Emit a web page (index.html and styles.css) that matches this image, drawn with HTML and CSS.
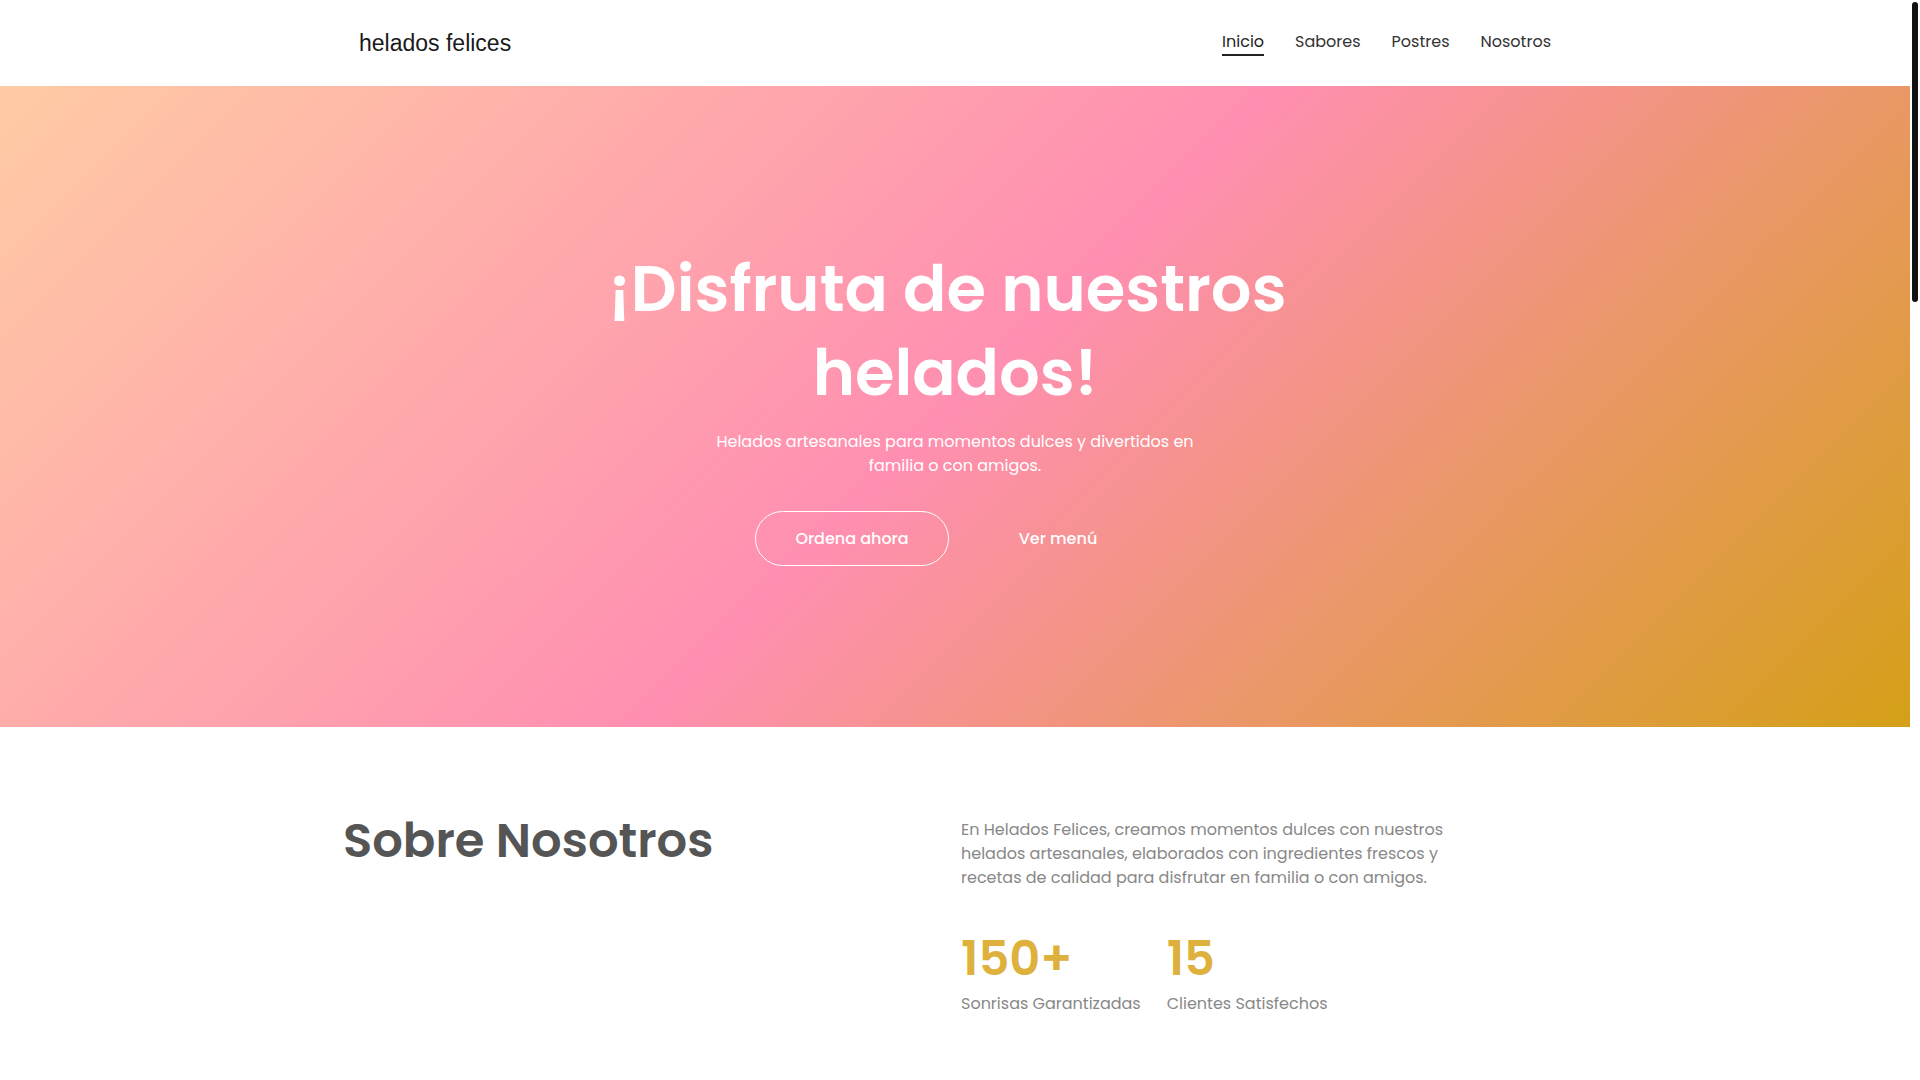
FILE: index.html
```html
<!DOCTYPE html>
<html lang="es">
<head>
<meta charset="utf-8">
<title>Helados Felices</title>
<link rel="stylesheet" href="styles.css">
</head>
<body>
<header class="site-header">
  <div class="nav-inner">
    <a class="logo" href="#">helados felices</a>
    <nav class="nav-links">
      <a class="nav-link active" href="#">Inicio</a>
      <a class="nav-link" href="#">Sabores</a>
      <a class="nav-link" href="#">Postres</a>
      <a class="nav-link" href="#">Nosotros</a>
    </nav>
  </div>
</header>

<section class="hero">
  <div class="hero-content">
    <h1 class="hero-title">¡Disfruta de nuestros helados!</h1>
    <p class="hero-text">Helados artesanales para momentos dulces y divertidos en familia o con amigos.</p>
    <div class="hero-actions">
      <a class="btn btn-outline" href="#">Ordena ahora</a>
      <a class="btn btn-ghost" href="#">Ver menú</a>
    </div>
  </div>
</section>

<section class="about">
  <div class="about-inner">
    <h2 class="about-title">Sobre Nosotros</h2>
    <div class="about-body">
      <p class="about-text">En Helados Felices, creamos momentos dulces con nuestros helados artesanales, elaborados con ingredientes frescos y recetas de calidad para disfrutar en familia o con amigos.</p>
      <div class="stats">
        <div class="stat">
          <span class="stat-number">150+</span>
          <span class="stat-label">Sonrisas Garantizadas</span>
        </div>
        <div class="stat">
          <span class="stat-number">15</span>
          <span class="stat-label">Clientes Satisfechos</span>
        </div>
      </div>
    </div>
  </div>
</section>

<div class="scrollbar" aria-hidden="true"><div class="scrollbar-thumb"></div></div>
</body>
</html>
```

FILE: styles.css
```css
html {
  background: #fff;
}

body {
  margin: 0;
  padding-right: 10px;
  font-family: "Poppins", "Open Sans", sans-serif;
  color: #333;
  background: #fff;
}

/* Scrollbar (as shown at the right edge) */
.scrollbar {
  position: fixed;
  top: 0;
  right: 0;
  width: 10px;
  height: 1080px;
  background: #fff;
}

.scrollbar-thumb {
  margin: 2px;
  width: 6px;
  height: 300px;
  border-radius: 3px;
  background: #111;
}

/* Header */
.site-header {
  height: 86px;
  display: flex;
  align-items: center;
  background: #fff;
}

.nav-inner {
  width: 1192px;
  margin: 0 auto;
  display: flex;
  justify-content: space-between;
  align-items: center;
}

.logo {
  font-family: "Liberation Sans", Arial, sans-serif;
  font-size: 23px;
  color: #1a1a1a;
  text-decoration: none;
}

.nav-links {
  display: flex;
  gap: 31px;
  align-items: center;
}

.nav-link {
  font-size: 16px;
  line-height: 24px;
  color: #333;
  text-decoration: none;
  border-bottom: 2px solid transparent;
}

.nav-link.active {
  color: #222;
  border-bottom-color: #222;
}

/* Hero */
.hero {
  height: 641px;
  display: flex;
  align-items: center;
  justify-content: center;
  text-align: center;
  color: #fff;
  background: linear-gradient(135deg, #ffcba4 0%, #ff8fb1 50%, #d4a017 100%);
}

.hero-title {
  font-size: 64px;
  font-weight: 600;
  line-height: 1.3;
  max-width: 820px;
  margin: 0 auto;
  white-space: break-spaces;
}

.hero-text {
  font-size: 16px;
  line-height: 24px;
  max-width: 500px;
  margin: 16px auto 0;
}

.hero-actions {
  display: flex;
  justify-content: center;
  gap: 12px;
  margin-top: 33px;
}

.btn {
  box-sizing: border-box;
  width: 194px;
  padding: 16px 0;
  border-radius: 999px;
  border: 1px solid transparent;
  font-size: 16px;
  font-weight: 500;
  line-height: 21px;
  text-align: center;
  color: #fff;
  text-decoration: none;
}

.btn-outline {
  border-color: #fff;
}

/* About */
.about {
  padding: 80px 0 80px;
}

.about-inner {
  width: 1224px;
  margin: 0 auto;
  display: grid;
  grid-template-columns: 1fr 1fr;
  column-gap: 12px;
  align-items: start;
}

.about-title {
  font-size: 48px;
  font-weight: 600;
  line-height: 1.2;
  color: #555;
  margin: 5px 0 0;
}

.about-text {
  font-size: 16px;
  line-height: 24px;
  color: #888;
  max-width: 500px;
  margin: 11px 0 0;
}

.stats {
  display: flex;
  gap: 26px;
  margin-top: 40px;
}

.stat {
  display: flex;
  flex-direction: column;
}

.stat-number {
  font-size: 48px;
  font-weight: 600;
  line-height: 1.2;
  color: #ddb13c;
}

.stat-label {
  font-size: 16px;
  line-height: 24px;
  color: #888;
  margin-top: 4px;
}
```
